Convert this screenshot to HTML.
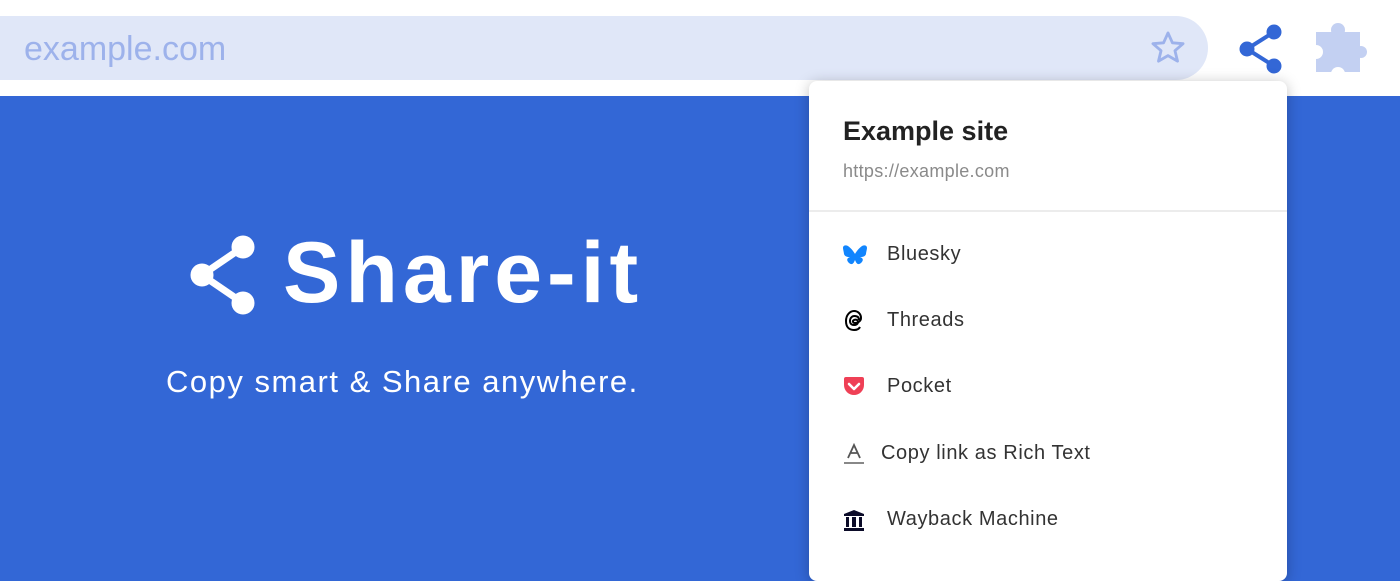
<!DOCTYPE html>
<html><head><style>
body{margin:0;width:1400px;height:560px;overflow:hidden;background:#3367d6;font-family:"Liberation Sans",sans-serif;position:relative}
.top{position:absolute;left:0;top:0;width:1400px;height:96px;background:#fff}
.pill{position:absolute;left:0;top:16px;width:1208px;height:64px;background:#e0e7f8;border-radius:0 32px 32px 0}
.url{position:absolute;left:24px;top:30px;font-size:34px;color:#9db2eb}
.pop{position:absolute;left:809px;top:81px;width:478px;height:500px;background:#fff;border-radius:8px;box-shadow:0 2px 14px rgba(0,0,0,.25)}
.t1{position:absolute;left:34px;top:35px;font-size:27px;font-weight:bold;color:#222}
.t2{position:absolute;left:34px;top:80px;font-size:18px;color:#8a8a8a;letter-spacing:.3px}
.div{position:absolute;left:0;top:129px;width:478px;height:2px;background:#ececec}
.it{position:absolute;left:78px;font-size:20px;color:#333;letter-spacing:.6px}
.ic{position:absolute;left:34px}
.title{position:absolute;left:283px;top:224px;font-size:86px;font-weight:bold;color:#fff;letter-spacing:5px}
.sub{position:absolute;left:166px;top:364px;font-size:31px;color:#fff;letter-spacing:1.5px}
</style></head><body>
<div class="top"></div>
<div class="pill"></div>
<div class="url">example.com</div>
<svg style="position:absolute;left:1148px;top:29px" width="40" height="38" viewBox="0 0 24 24"><path d="M12 2.5l2.8 6.2 6.7.6-5.1 4.4 1.6 6.6L12 16.8l-6 3.5 1.6-6.6-5.1-4.4 6.7-.6z" fill="none" stroke="#9db2eb" stroke-width="1.8" stroke-linejoin="round"/></svg>
<svg style="position:absolute;left:1236px;top:22px" width="50" height="54"><g fill="#3367d6" stroke="#3367d6"><line x1="38" y1="10" x2="11" y2="27" stroke-width="4"/><line x1="11" y1="27" x2="38" y2="44" stroke-width="4"/><circle cx="38" cy="10" r="7"/><circle cx="11" cy="27" r="7"/><circle cx="38" cy="44" r="7"/></g></svg>
<svg style="position:absolute;left:1316px;top:22px" width="52" height="52" viewBox="0 0 52 52"><rect x="0" y="10" width="44" height="40" fill="#c3d0f2"/><circle cx="22" cy="8" r="7" fill="#c3d0f2"/><circle cx="45" cy="30" r="6" fill="#c3d0f2"/><circle cx="0" cy="30" r="7" fill="#fff"/><circle cx="22" cy="52" r="7" fill="#fff"/></svg>
<svg style="position:absolute;left:186px;top:230px" width="90" height="92"><g fill="#fff" stroke="#fff"><line x1="57" y1="17" x2="16" y2="45" stroke-width="7"/><line x1="16" y1="45" x2="57" y2="73" stroke-width="7"/><circle cx="57" cy="17" r="11"/><circle cx="16" cy="45" r="11"/><circle cx="57" cy="73" r="11"/></g></svg>
<div class="title">Share-it</div>
<div class="sub">Copy smart &amp; Share anywhere.</div>
<div class="pop">
<svg class="ic" style="top:164px" width="24" height="20" viewBox="0 0 24 20"><path d="M5 1c3 2 6 6 7 8 1-2 4-6 7-8 2-1 5-1 5 2 0 1-1 5-1 6-1 3-4 3-6 3 3 1 4 3 1 6-4 3-5-1-6-3-1 2-2 6-6 3-3-3-2-5 1-6-2 0-5 0-6-3 0-1-1-5-1-6 0-3 3-3 5-2z" fill="#1185fe"/></svg>
<div class="t1">Example site</div>
<div class="t2">https://example.com</div>
<div class="div"></div>
<div class="it" style="top:162px">Bluesky</div>
<svg class="ic" style="top:229px;left:35px" width="22" height="22" viewBox="0 0 22 22"><path d="M15 10c0-3-2-4-4.5-4S6 8 6 11s2 4 4 4 4-1 4-3-2-3-4-2c-2 1-1 3 1 3 3 0 6-2 6-5 0-4-3-7-7-7S2 5 2 11s3 9 8 9c3 0 5-1 6-3" fill="none" stroke="#000" stroke-width="2"/></svg>
<div class="it" style="top:228px">Threads</div>
<svg class="ic" style="top:296px" width="22" height="20" viewBox="0 0 22 20"><path d="M1 2a2 2 0 0 1 2-2h16a2 2 0 0 1 2 2v6a10 10 0 0 1-20 0z" fill="#ef4056"/><path d="M6 7l5 5 5-5" fill="none" stroke="#fff" stroke-width="2.6" stroke-linecap="round" stroke-linejoin="round"/></svg>
<div class="it" style="top:294px">Pocket</div>
<svg class="ic" style="top:362px" width="22" height="22" viewBox="0 0 22 22"><path d="M5 15L11 2l6 13M7.5 10h7" fill="none" stroke="#555" stroke-width="1.8"/><rect x="1" y="19" width="20" height="2" fill="#888"/></svg>
<div class="it" style="top:361px;left:72px">Copy link as Rich Text</div>
<svg class="ic" style="top:428px" width="22" height="22" viewBox="0 0 22 22"><path d="M1 5L11 1l10 4v2H1z M3 8h3v10H3z M9 8h4v10H9z M16 8h3v10h-3z M1 19h20v3H1z" fill="#0b0b28"/></svg>
<div class="it" style="top:427px">Wayback Machine</div>
</div>
</body></html>
